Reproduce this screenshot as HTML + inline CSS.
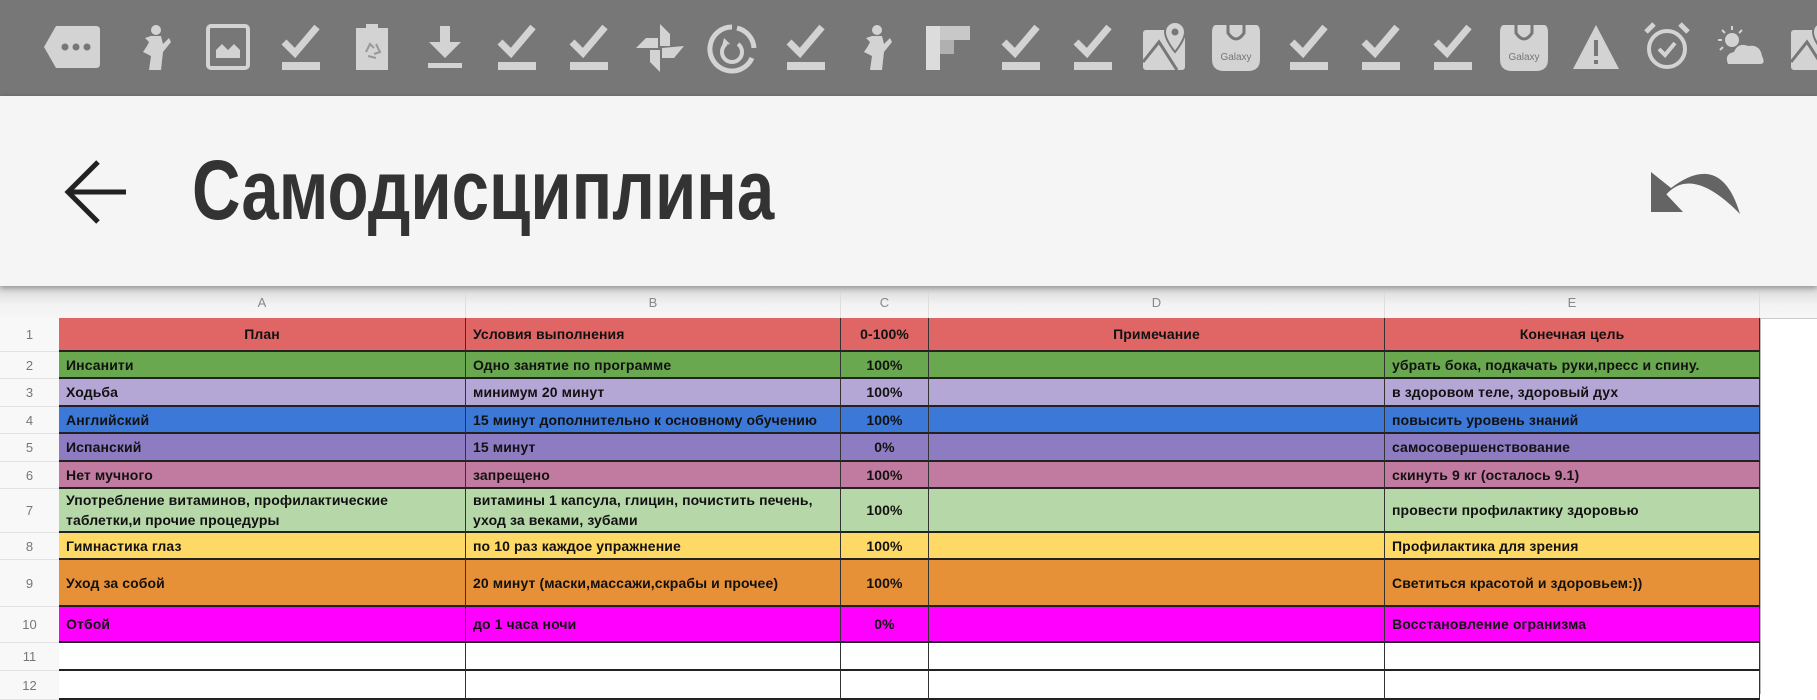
<!DOCTYPE html>
<html><head><meta charset="utf-8">
<style>
*{margin:0;padding:0;box-sizing:border-box}
body{width:1817px;height:694px;overflow:hidden;background:#fff;font-family:"Liberation Sans",sans-serif;position:relative}
#sb{position:absolute;left:0;top:0;width:1817px;height:96px;background:#777}
#sb svg{position:absolute;top:24px}
#ab{position:absolute;left:0;top:96px;width:1817px;height:190px;background:#f5f5f5;box-shadow:0 2px 6px rgba(0,0,0,.35);z-index:2}
#title{position:absolute;left:192px;top:52px;font-size:84px;font-weight:bold;color:#333;transform:scaleX(.8);transform-origin:left top;white-space:nowrap;line-height:1}
#hdr{position:absolute;left:0;top:286px;width:1817px;height:32px;background:linear-gradient(#d8d8d8,#f3f3f3 60%,#f6f6f6)}
.ch{position:absolute;top:286px;height:32px;line-height:34px;text-align:center;font-size:13px;color:#888;border-right:1px solid #ddd}
.rn{position:absolute;left:0;width:59px;text-align:center;font-size:13px;color:#777;border-bottom:1px solid #e2e2e2;background:#f8f8f8}
.c{position:absolute;font-size:14px;font-weight:bold;color:#111;padding-left:7px;display:flex;align-items:center;border-right:1px solid #333;border-bottom:2px solid #222;line-height:20px;overflow:hidden;letter-spacing:0.1px;white-space:nowrap}
.ctr{justify-content:center;padding-left:0}
</style></head><body>
<div id="sb">
<svg width="0" height="0" style="position:absolute"><defs>
<symbol id="chk" viewBox="0 0 40 46"><path d="M3 18 L14 29 L36 3" fill="none" stroke="#d3d3d3" stroke-width="7"/><rect x="1" y="38" width="38" height="8" fill="#d3d3d3"/></symbol>
<symbol id="fig" viewBox="0 0 36 46"><circle cx="19" cy="6" r="5" fill="#d3d3d3"/><path d="M8 14 L14 12 L24 12 L26 20 L32 14 L34 18 L26 28 L24 46 L12 46 L14 32 L6 28 L10 22 L12 18 Z" fill="#d3d3d3"/></symbol>
<symbol id="gal" viewBox="0 0 48 48"><path d="M4 2 H44 Q48 2 48 10 V36 Q48 48 36 48 H12 Q0 48 0 36 V10 Q0 2 4 2Z" fill="#d3d3d3"/><path d="M16 0 V10 Q24 22 32 10 V0" fill="none" stroke="#777" stroke-width="3"/><text x="24" y="37" font-size="10" text-anchor="middle" fill="#777" font-family="Liberation Sans">Galaxy</text></symbol>
<symbol id="map" viewBox="0 0 42 48"><rect x="0" y="8" width="42" height="40" rx="3" fill="#d3d3d3"/><path d="M0 40 L16 20 L34 48" fill="none" stroke="#777" stroke-width="3"/><path d="M32 0 a10 10 0 0 1 10 10 c0 8 -10 20 -10 20 c0 0 -10 -12 -10 -20 a10 10 0 0 1 10 -10z" fill="#d3d3d3" stroke="#777" stroke-width="2"/><circle cx="32" cy="10" r="3.5" fill="#777"/></symbol>
</defs></svg>
<svg style="left:44px" width="56" height="46" viewBox="0 0 56 46"><path d="M12 2 H52 Q56 2 56 6 V40 Q56 44 52 44 H12 L0 23Z" fill="#d3d3d3"/><circle cx="21" cy="23" r="3.5" fill="#777"/><circle cx="32" cy="23" r="3.5" fill="#777"/><circle cx="43" cy="23" r="3.5" fill="#777"/></svg>
<svg style="left:137px" width="36" height="46"><use href="#fig"/></svg>
<svg style="left:206px" width="44" height="46" viewBox="0 0 44 46"><rect x="2" y="2" width="40" height="42" rx="3" fill="none" stroke="#d3d3d3" stroke-width="4"/><path d="M10 34 L10 26 L16 20 L22 26 L28 20 L34 26 L34 34Z" fill="#d3d3d3"/></svg>
<svg style="left:281px" width="40" height="46"><use href="#chk"/></svg>
<svg style="left:356px" width="32" height="46" viewBox="0 0 32 46"><rect x="10" y="0" width="12" height="4" fill="#d3d3d3"/><rect x="0" y="4" width="32" height="42" fill="#d3d3d3"/><path d="M10 28 L14 20 L18 24 M20 20 L24 28 L18 30 M12 32 L20 34" fill="none" stroke="#999" stroke-width="2"/></svg>
<svg style="left:427px" width="36" height="46" viewBox="0 0 36 46"><rect x="13" y="2" width="10" height="18" fill="#d3d3d3"/><path d="M2 18 H34 L18 34Z" fill="#d3d3d3"/><rect x="1" y="39" width="34" height="5" fill="#d3d3d3"/></svg>
<svg style="left:497px" width="40" height="46"><use href="#chk"/></svg>
<svg style="left:569px" width="40" height="46"><use href="#chk"/></svg>
<svg style="left:636px" width="48" height="48" viewBox="0 0 48 48"><path d="M24 0 L34 10 V22 H24Z M48 22 L38 34 H26 V24Z M24 48 L14 38 V26 H24Z M0 24 L10 14 H22 V24Z" fill="#d3d3d3"/></svg>
<svg style="left:707px" width="50" height="50" viewBox="0 0 50 50"><path d="M25 3 A22 22 0 1 0 45 34" fill="none" stroke="#d3d3d3" stroke-width="5"/><path d="M30 4 A22 22 0 0 1 47 24" fill="none" stroke="#d3d3d3" stroke-width="5"/><path d="M19 20 A10 10 0 1 0 31 20" fill="none" stroke="#d3d3d3" stroke-width="4"/><path d="M17 14 L23 20 L15 22Z" fill="#d3d3d3"/></svg>
<svg style="left:786px" width="40" height="46"><use href="#chk"/></svg>
<svg style="left:858px" width="36" height="46"><use href="#fig"/></svg>
<svg style="left:926px" width="44" height="46" viewBox="0 0 44 46"><rect x="0" y="2" width="14" height="44" fill="#dcdcdc"/><rect x="14" y="2" width="30" height="14" fill="#c8c8c8"/><rect x="14" y="16" width="14" height="14" fill="#b0b0b0"/></svg>
<svg style="left:1001px" width="40" height="46"><use href="#chk"/></svg>
<svg style="left:1073px" width="40" height="46"><use href="#chk"/></svg>
<svg style="left:1143px;top:22px" width="42" height="48"><use href="#map"/></svg>
<svg style="left:1212px;top:23px" width="48" height="48"><use href="#gal"/></svg>
<svg style="left:1289px" width="40" height="46"><use href="#chk"/></svg>
<svg style="left:1361px" width="40" height="46"><use href="#chk"/></svg>
<svg style="left:1433px" width="40" height="46"><use href="#chk"/></svg>
<svg style="left:1500px;top:23px" width="48" height="48"><use href="#gal"/></svg>
<svg style="left:1572px" width="48" height="46" viewBox="0 0 48 46"><path d="M24 1 L47 45 H1Z" fill="#d3d3d3"/><rect x="22" y="16" width="4" height="16" fill="#777"/><rect x="22" y="36" width="4" height="4" fill="#777"/></svg>
<svg style="left:1644px;top:22px" width="46" height="50" viewBox="0 0 46 50"><circle cx="23" cy="27" r="18" fill="none" stroke="#d3d3d3" stroke-width="4"/><path d="M2 10 L10 2 M44 10 L36 2" stroke="#d3d3d3" stroke-width="5"/><path d="M15 27 L21 33 L31 21" fill="none" stroke="#d3d3d3" stroke-width="4"/></svg>
<svg style="left:1714px;top:26px" width="52" height="44" viewBox="0 0 52 44"><circle cx="18" cy="14" r="7" fill="#d3d3d3"/><path d="M18 0v4M4 14h4M8 4l3 3M28 4l-3 3M6 24l3-3" stroke="#d3d3d3" stroke-width="2"/><path d="M14 38 Q10 28 20 26 Q24 16 34 20 Q46 18 48 30 Q52 38 46 38Z" fill="#d3d3d3"/></svg>
<svg style="left:1791px;top:22px" width="42" height="48"><use href="#map"/></svg>
</div>
<div id="ab">
<svg style="position:absolute;left:64px;top:64px" width="64" height="64" viewBox="0 0 64 64"><path d="M62 32 H6 M34 2 L4 32 L34 62" fill="none" stroke="#222" stroke-width="5"/></svg>
<div id="title">Самодисциплина</div>
<svg style="position:absolute;left:1651px;top:76px" width="90" height="42" viewBox="0 0 90 42"><path d="M0 6 L14 24 Q40 -8 89 42 Q70 -22 20 16 L0 0Z" fill="#646464"/><path d="M0 6 V40 H32 Z" fill="#646464"/></svg>
</div>
<div id="hdr"></div>
<div class="ch" style="left:59px;width:407px">A</div>
<div class="ch" style="left:466px;width:375px">B</div>
<div class="ch" style="left:841px;width:88px">C</div>
<div class="ch" style="left:929px;width:456px">D</div>
<div class="ch" style="left:1385px;width:375px">E</div>
<div class="ch" style="left:1760px;width:57px;border:none"></div>
<div style="position:absolute;left:0;top:318px;width:59px;height:376px;background:#f8f8f8"></div>
<div style="position:absolute;left:1760px;top:318px;width:1px;height:376px;background:#bbb"></div>
<div style="position:absolute;left:1761px;top:318px;width:56px;height:1px;background:#ccc"></div>
<div id="rows"></div>
<script>
var R=[[318,352,'#e06666',['План','Условия выполнения','0-100%','Примечание','Конечная цель'],1],
[352,379,'#6aa84f',['Инсанити','Одно занятие по программе','100%','','убрать бока, подкачать руки,пресс и спину.']],
[379,407,'#b4a7d6',['Ходьба','минимум 20 минут','100%','','в здоровом теле, здоровый дух']],
[407,434,'#3c78d8',['Английский','15 минут дополнительно к основному обучению','100%','','повысить уровень знаний']],
[434,462,'#8e7cc3',['Испанский','15 минут','0%','','самосовершенствование']],
[462,489,'#c27ba0',['Нет мучного','запрещено','100%','','скинуть 9 кг (осталось 9.1)']],
[489,533,'#b6d7a8',['Употребление витаминов, профилактические<br>таблетки,и прочие процедуры','витамины 1 капсула, глицин, почистить печень,<br>уход за веками, зубами','100%','','провести профилактику здоровью']],
[533,560,'#ffd966',['Гимнастика глаз','по 10 раз каждое упражнение','100%','','Профилактика для зрения']],
[560,607,'#e69138',['Уход за собой','20 минут (маски,массажи,скрабы и прочее)','100%','','Светиться красотой и здоровьем:))']],
[607,643,'#ff00ff',['Отбой','до 1 часа ночи','0%','','Восстановление огранизма']],
[643,671,'#fff',['','','','','']],[671,700,'#fff',['','','','','']]];
var X=[59,466,841,929,1385,1760],h='';
R.forEach(function(r,i){var t=r[0],hh=r[1]-r[0];
h+='<div class="rn" style="top:'+t+'px;height:'+hh+'px;line-height:'+hh+'px">'+(i+1)+'</div>';
for(var j=0;j<5;j++){var cls='c'+((j==2||(r[4]&&j!=1))?' ctr':'');
h+='<div class="'+cls+'" style="left:'+X[j]+'px;top:'+t+'px;width:'+(X[j+1]-X[j])+'px;height:'+hh+'px;background:'+r[2]+'"><span>'+r[3][j]+'</span></div>';}});
document.getElementById('rows').innerHTML=h;
</script>
</body></html>
